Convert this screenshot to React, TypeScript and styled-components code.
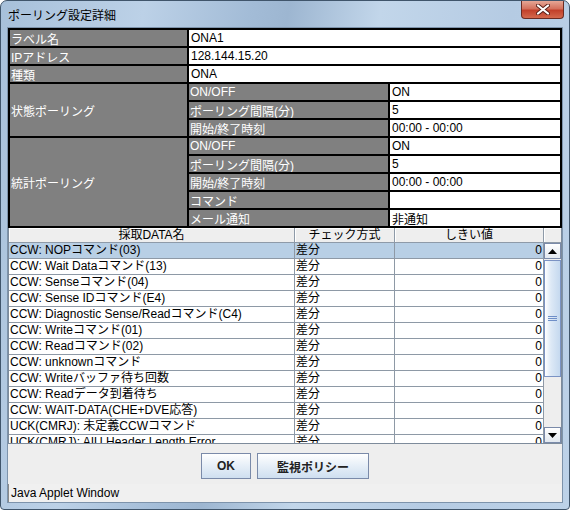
import * as React from "react";
import styled, { createGlobalStyle } from "styled-components";

const GlobalStyle = createGlobalStyle`
  html, body {
    margin: 0;
    padding: 0;
    background: #ffffff;
  }
  body {
    font-family: "Liberation Sans", "Noto Sans CJK JP", sans-serif;
    font-size: 12px;
  }
`;

interface DataRow {
  name: string;
  method: string;
  threshold: number;
}

const rows: DataRow[] = [
  { name: "CCW: NOPコマンド(03)", method: "差分", threshold: 0 },
  { name: "CCW: Wait Dataコマンド(13)", method: "差分", threshold: 0 },
  { name: "CCW: Senseコマンド(04)", method: "差分", threshold: 0 },
  { name: "CCW: Sense IDコマンド(E4)", method: "差分", threshold: 0 },
  { name: "CCW: Diagnostic Sense/Readコマンド(C4)", method: "差分", threshold: 0 },
  { name: "CCW: Writeコマンド(01)", method: "差分", threshold: 0 },
  { name: "CCW: Readコマンド(02)", method: "差分", threshold: 0 },
  { name: "CCW: unknownコマンド", method: "差分", threshold: 0 },
  { name: "CCW: Writeバッファ待ち回数", method: "差分", threshold: 0 },
  { name: "CCW: Readデータ到着待ち", method: "差分", threshold: 0 },
  { name: "CCW: WAIT-DATA(CHE+DVE応答)", method: "差分", threshold: 0 },
  { name: "UCK(CMRJ): 未定義CCWコマンド", method: "差分", threshold: 0 },
  { name: "UCK(CMRJ): AIU Header Length Error", method: "差分", threshold: 0 },
];

const Arrow = ({ up }: { up?: boolean }) => (
  <svg width="9" height="5" viewBox="0 0 9 5">
    {up ? (
      <polygon points="0,5 4.5,0 9,5" fill="#000" />
    ) : (
      <polygon points="0,0 4.5,5 9,0" fill="#000" />
    )}
  </svg>
);

export default function App() {
  return (
    <>
      <GlobalStyle />
      <Window>
        <TitleBar>
          <Title>ポーリング設定詳細</Title>
          <CloseButton>
            <svg width="14" height="11" viewBox="0 0 14 11">
              <path
                d="M2 1.5 L12 9.5 M12 1.5 L2 9.5"
                stroke="#5a2018"
                strokeWidth="4"
                strokeLinecap="round"
              />
              <path
                d="M2 1.5 L12 9.5 M12 1.5 L2 9.5"
                stroke="#ffffff"
                strokeWidth="2.2"
                strokeLinecap="round"
              />
            </svg>
          </CloseButton>
        </TitleBar>

        <Client>
          <InfoGrid>
            <Label>ラベル名</Label>
            <Value $wide>ONA1</Value>
            <Label>IPアドレス</Label>
            <Value $wide>128.144.15.20</Value>
            <Label>種類</Label>
            <Value $wide>ONA</Value>

            <Label $rows={3}>状態ポーリング</Label>
            <Label>ON/OFF</Label>
            <Value>ON</Value>
            <Label>ポーリング間隔(分)</Label>
            <Value>5</Value>
            <Label>開始/終了時刻</Label>
            <Value>00:00 - 00:00</Value>

            <Label $rows={5}>統計ポーリング</Label>
            <Label>ON/OFF</Label>
            <Value>ON</Value>
            <Label>ポーリング間隔(分)</Label>
            <Value>5</Value>
            <Label>開始/終了時刻</Label>
            <Value>00:00 - 00:00</Value>
            <Label>コマンド</Label>
            <Value></Value>
            <Label>メール通知</Label>
            <Value>非通知</Value>
          </InfoGrid>

          <TablePane>
            <TableMain>
              <HeaderRow>
                <HeaderCell>採取DATA名</HeaderCell>
                <HeaderCell>チェック方式</HeaderCell>
                <HeaderCell>しきい値</HeaderCell>
              </HeaderRow>
              <Body>
                {rows.map((r, i) => (
                  <Row key={r.name} $selected={i === 0}>
                    <Cell>{r.name}</Cell>
                    <Cell>{r.method}</Cell>
                    <Cell $right>{r.threshold}</Cell>
                  </Row>
                ))}
              </Body>
            </TableMain>
            <ScrollColumn>
              <HeaderCorner />
              <ScrollBar>
                <ArrowButton>
                  <Arrow up />
                </ArrowButton>
                <Track>
                  <Thumb>
                    <svg width="9" height="6" viewBox="0 0 9 6">
                      <path d="M0 0.5 H9 M0 2.5 H9 M0 4.5 H9" stroke="#6f8fc8" strokeWidth="1" />
                    </svg>
                  </Thumb>
                </Track>
                <ArrowButton>
                  <Arrow />
                </ArrowButton>
              </ScrollBar>
            </ScrollColumn>
          </TablePane>

          <ButtonRow>
            <Button $width={50}>OK</Button>
            <Button $width={112}>監視ポリシー</Button>
          </ButtonRow>

          <StatusBar>Java Applet Window</StatusBar>
        </Client>
      </Window>
    </>
  );
}

//////////
// Style
//////////
const Window = styled.div`
  width: 570px;
  height: 510px;
  box-sizing: border-box;
  display: flex;
  flex-direction: column;
  border: 1px solid #40556b;
  border-radius: 7px 7px 4px 4px;
  overflow: hidden;
  background: linear-gradient(
    100deg,
    #a7c0da 0%,
    #bcd1e7 22%,
    #a3bcd7 38%,
    #9db6d1 44%,
    #c2d6ea 58%,
    #b5cbe3 78%,
    #bdd2e8 100%
  );
`;

const TitleBar = styled.div`
  height: 27px;
  display: flex;
  align-items: flex-start;
  padding-left: 7px;
`;

const Title = styled.div`
  margin-top: 6px;
  line-height: 16px;
  font-family: "Noto Sans CJK JP", sans-serif;
  font-size: 12px;
  color: #000;
`;

const CloseButton = styled.div`
  margin-left: auto;
  margin-right: 5px;
  width: 43px;
  height: 18px;
  box-sizing: border-box;
  border: 1px solid #6b2b22;
  border-top: none;
  border-radius: 0 0 4px 4px;
  background: linear-gradient(#e6a796 0%, #d4715d 45%, #c2402a 55%, #d4684c 100%);
  display: flex;
  align-items: center;
  justify-content: center;
`;

const Client = styled.div`
  flex: 1;
  margin: 0 7px 7px;
  background: #eeeeee;
  display: flex;
  flex-direction: column;
  box-shadow: 0 0 0 1px #7d93ab;
`;

const InfoGrid = styled.div`
  display: grid;
  grid-template-columns: 177px 199px 170px;
  grid-auto-rows: 16px;
  gap: 2px;
  padding: 2px;
  background: #000;
`;

const Label = styled.div<{ $rows?: number }>`
  grid-row: span ${(p) => p.$rows ?? 1};
  background: #808080;
  color: #fff;
  padding-left: 1px;
  display: flex;
  align-items: center;
  white-space: nowrap;
  overflow: hidden;
`;

const Value = styled.div<{ $wide?: boolean }>`
  grid-column: span ${(p) => (p.$wide ? 2 : 1)};
  background: #fff;
  color: #000;
  padding-left: 2px;
  display: flex;
  align-items: center;
  white-space: nowrap;
`;

const TablePane = styled.div`
  display: flex;
  border-left: 1px solid #7d8b9b;
  border-right: 1px solid #7d8b9b;
  border-bottom: 1px solid #7d8b9b;
`;

const TableMain = styled.div`
  width: 535px;
  display: flex;
  flex-direction: column;
`;

const columns = "286px 100px 149px";

const HeaderRow = styled.div`
  display: grid;
  grid-template-columns: ${columns};
  height: 15px;
`;

const HeaderCell = styled.div`
  box-sizing: border-box;
  border-right: 1px solid #8e9aa8;
  border-bottom: 1px solid #8e9aa8;
  box-shadow: inset 1px 1px 0 #ffffff;
  background: #eeeeee;
  text-align: center;
  line-height: 14px;
  color: #000;
`;

const Body = styled.div`
  height: 200px;
  overflow: hidden;
  background: #fff;
`;

const Row = styled.div<{ $selected?: boolean }>`
  display: grid;
  grid-template-columns: ${columns};
  height: 16px;
  box-sizing: border-box;
  border-bottom: 1px solid #8e99a6;
  background: ${(p) => (p.$selected ? "#b8cfe5" : "#ffffff")};
`;

const Cell = styled.div<{ $right?: boolean }>`
  border-right: 1px solid #8e99a6;
  padding: 0 1px;
  line-height: 15px;
  white-space: nowrap;
  overflow: hidden;
  text-align: ${(p) => (p.$right ? "right" : "left")};
  color: #000;
`;

const ScrollColumn = styled.div`
  width: 17px;
  display: flex;
  flex-direction: column;
`;

const HeaderCorner = styled.div`
  height: 15px;
  box-sizing: border-box;
  background: #eeeeee;
  border-bottom: 1px solid #8e9aa8;
  box-shadow: inset 1px 1px 0 #ffffff;
`;

const ScrollBar = styled.div`
  height: 200px;
  display: flex;
  flex-direction: column;
  background: #eeeeee;
`;

const ArrowButton = styled.div`
  height: 16px;
  box-sizing: border-box;
  border: 1px solid #7a8aa9;
  background: linear-gradient(#ffffff, #e2e8ef);
  display: flex;
  align-items: center;
  justify-content: center;
`;

const Track = styled.div`
  flex: 1;
  padding-top: 1px;
`;

const Thumb = styled.div`
  height: 117px;
  box-sizing: border-box;
  border: 1px solid #7b93c4;
  background: linear-gradient(to right, #ffffff 0%, #dde9f6 40%, #c5d9ef 100%);
  display: flex;
  align-items: center;
  justify-content: center;
`;

const ButtonRow = styled.div`
  display: flex;
  justify-content: center;
  gap: 6px;
  padding: 9px 0 5px;
`;

const Button = styled.button<{ $width: number }>`
  width: ${(p) => p.$width}px;
  height: 26px;
  padding: 0;
  border: 1px solid #7a8aa9;
  background: linear-gradient(#ffffff 0%, #e8f0f8 45%, #cfdff0 100%);
  font-family: "Liberation Sans", "Noto Sans CJK JP", sans-serif;
  font-size: 12px;
  font-weight: bold;
  color: #222;
`;

const StatusBar = styled.div`
  flex: 1;
  padding-left: 2px;
  border-left: 1px solid #8a8a8a;
  display: flex;
  align-items: center;
  background: #f0f0f0;
  color: #000;
  font-family: "Liberation Sans", sans-serif;
  font-size: 12px;
`;
